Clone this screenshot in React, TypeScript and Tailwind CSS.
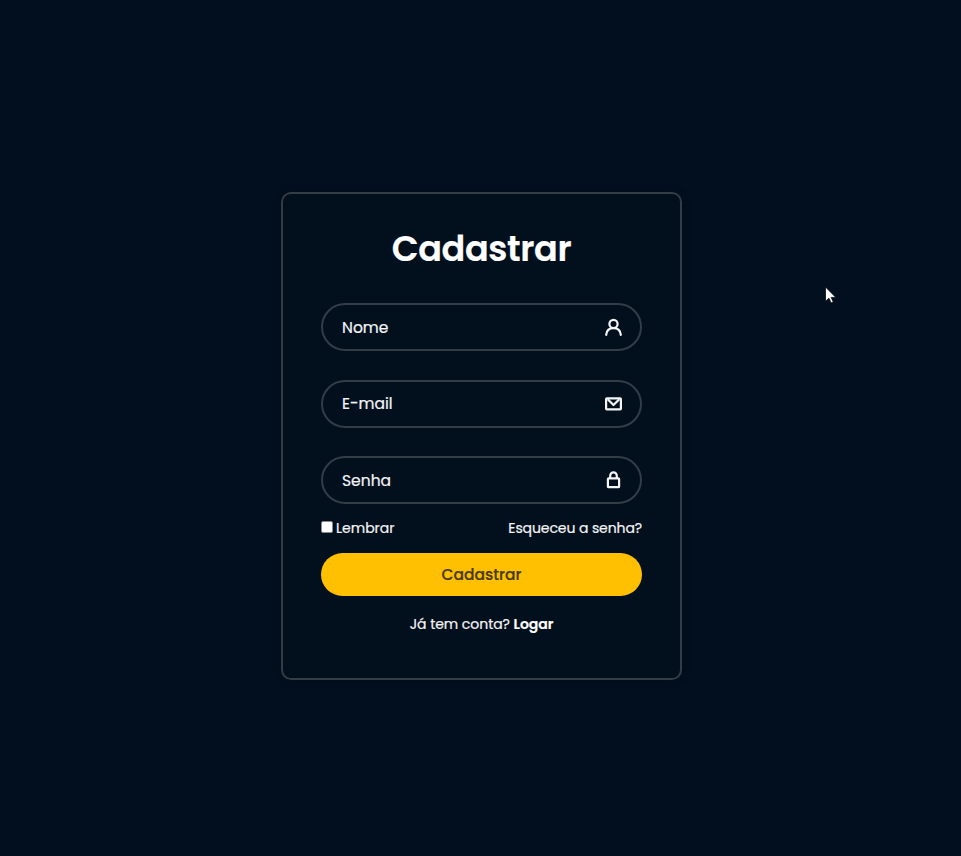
import React from "react";

const stroke = {
  fill: "none",
  stroke: "currentColor",
  strokeWidth: 2.2,
  strokeLinejoin: "round" as const,
};

function UserIcon() {
  return (
    <svg width="20" height="20" viewBox="0 0 20 20" {...stroke} strokeLinecap="round">
      <circle cx="10.5" cy="5.9" r="4.1" />
      <path d="M3.2 16.9C3.5 12.5 6.5 10.1 10.5 10.1S17.5 12.5 17.8 16.9" />
    </svg>
  );
}

function MailIcon() {
  return (
    <svg width="20" height="20" viewBox="0 0 20 20" {...stroke}>
      <rect x="3.1" y="4.4" width="14.8" height="11" rx="0.8" />
      <path d="M4.7 5.2L10.5 11L16.3 5.2" />
    </svg>
  );
}

function LockIcon() {
  return (
    <svg width="20" height="20" viewBox="0 0 20 20" {...stroke}>
      <rect x="4.9" y="7.3" width="11.2" height="8.9" rx="0.8" />
      <path d="M7.2 7.3V4.7a3.3 3.3 0 0 1 6.6 0V7.3" />
    </svg>
  );
}

function Field({ label, children }: { label: string; children: React.ReactNode }) {
  return (
    <div className="flex h-12 items-center justify-between rounded-full border-2 border-[#333d48] pt-[1.9px] pr-[16.5px] pl-[19.5px] text-[#f4f5f6]">
      <span className="text-[15.5px] leading-6 [-webkit-text-stroke:0.2px_#f4f5f6]">{label}</span>
      {children}
    </div>
  );
}

export default function App() {
  return (
    <main className="relative flex h-[856px] w-[961px] justify-center overflow-hidden bg-[#020f1e] pt-[192px] pl-px font-['Poppins','Inter',sans-serif] text-white">
      <form className="h-[488px] w-[401px] rounded-[10px] border-2 border-[#333d48] bg-[#020f1d] px-[38px] shadow-[0_0_10px_rgba(0,0,0,0.2)]">
        <h1 className="mt-7 pl-px text-center text-[35px] leading-[54px] font-semibold tracking-[-0.35px] whitespace-nowrap [-webkit-text-stroke:0.2px_white]">
          Cadastrar
        </h1>
        <div className="mt-[27px] flex flex-col gap-[28.5px]">
          <Field label="Nome">
            <UserIcon />
          </Field>
          <Field label="E-mail">
            <MailIcon />
          </Field>
          <Field label="Senha">
            <LockIcon />
          </Field>
        </div>
        <div className="mt-[13px] flex h-[22px] items-center justify-between text-[14px] leading-[22px] text-[#f4f5f6] [-webkit-text-stroke:0.2px_#f4f5f6]">
          <label className="flex items-center">
            <span className="relative -top-px mr-[3.5px] size-3 rounded-[2px] border border-[#8b8b8b] bg-white" />
            <span>Lembrar</span>
          </label>
          <span className="-mr-[0.5px] tracking-[-0.1px]">Esqueceu a senha?</span>
        </div>
        <button
          type="button"
          className="mt-[14px] block h-[43px] w-full rounded-full bg-[#ffc002] pl-px text-[15.5px] font-medium text-[#473a12] [-webkit-text-stroke:0.2px_#473a12]"
        >
          Cadastrar
        </button>
        <p className="mt-[17px] pl-px text-center text-[14px] leading-[22px] tracking-[-0.05px] text-[#f4f5f6] [-webkit-text-stroke:0.2px_#f4f5f6]">
          Já tem conta? <b className="font-semibold text-white">Logar</b>
        </p>
      </form>
      <svg className="absolute top-[286px] left-[824px]" width="14" height="20" viewBox="0 0 14 20">
        <path
          d="M1.5 1V15.3L4.9 12.2L7.1 17L9.3 16L7.2 11.4H11.8Z"
          fill="white"
          stroke="#080c14"
          strokeWidth="0.8"
        />
      </svg>
    </main>
  );
}
